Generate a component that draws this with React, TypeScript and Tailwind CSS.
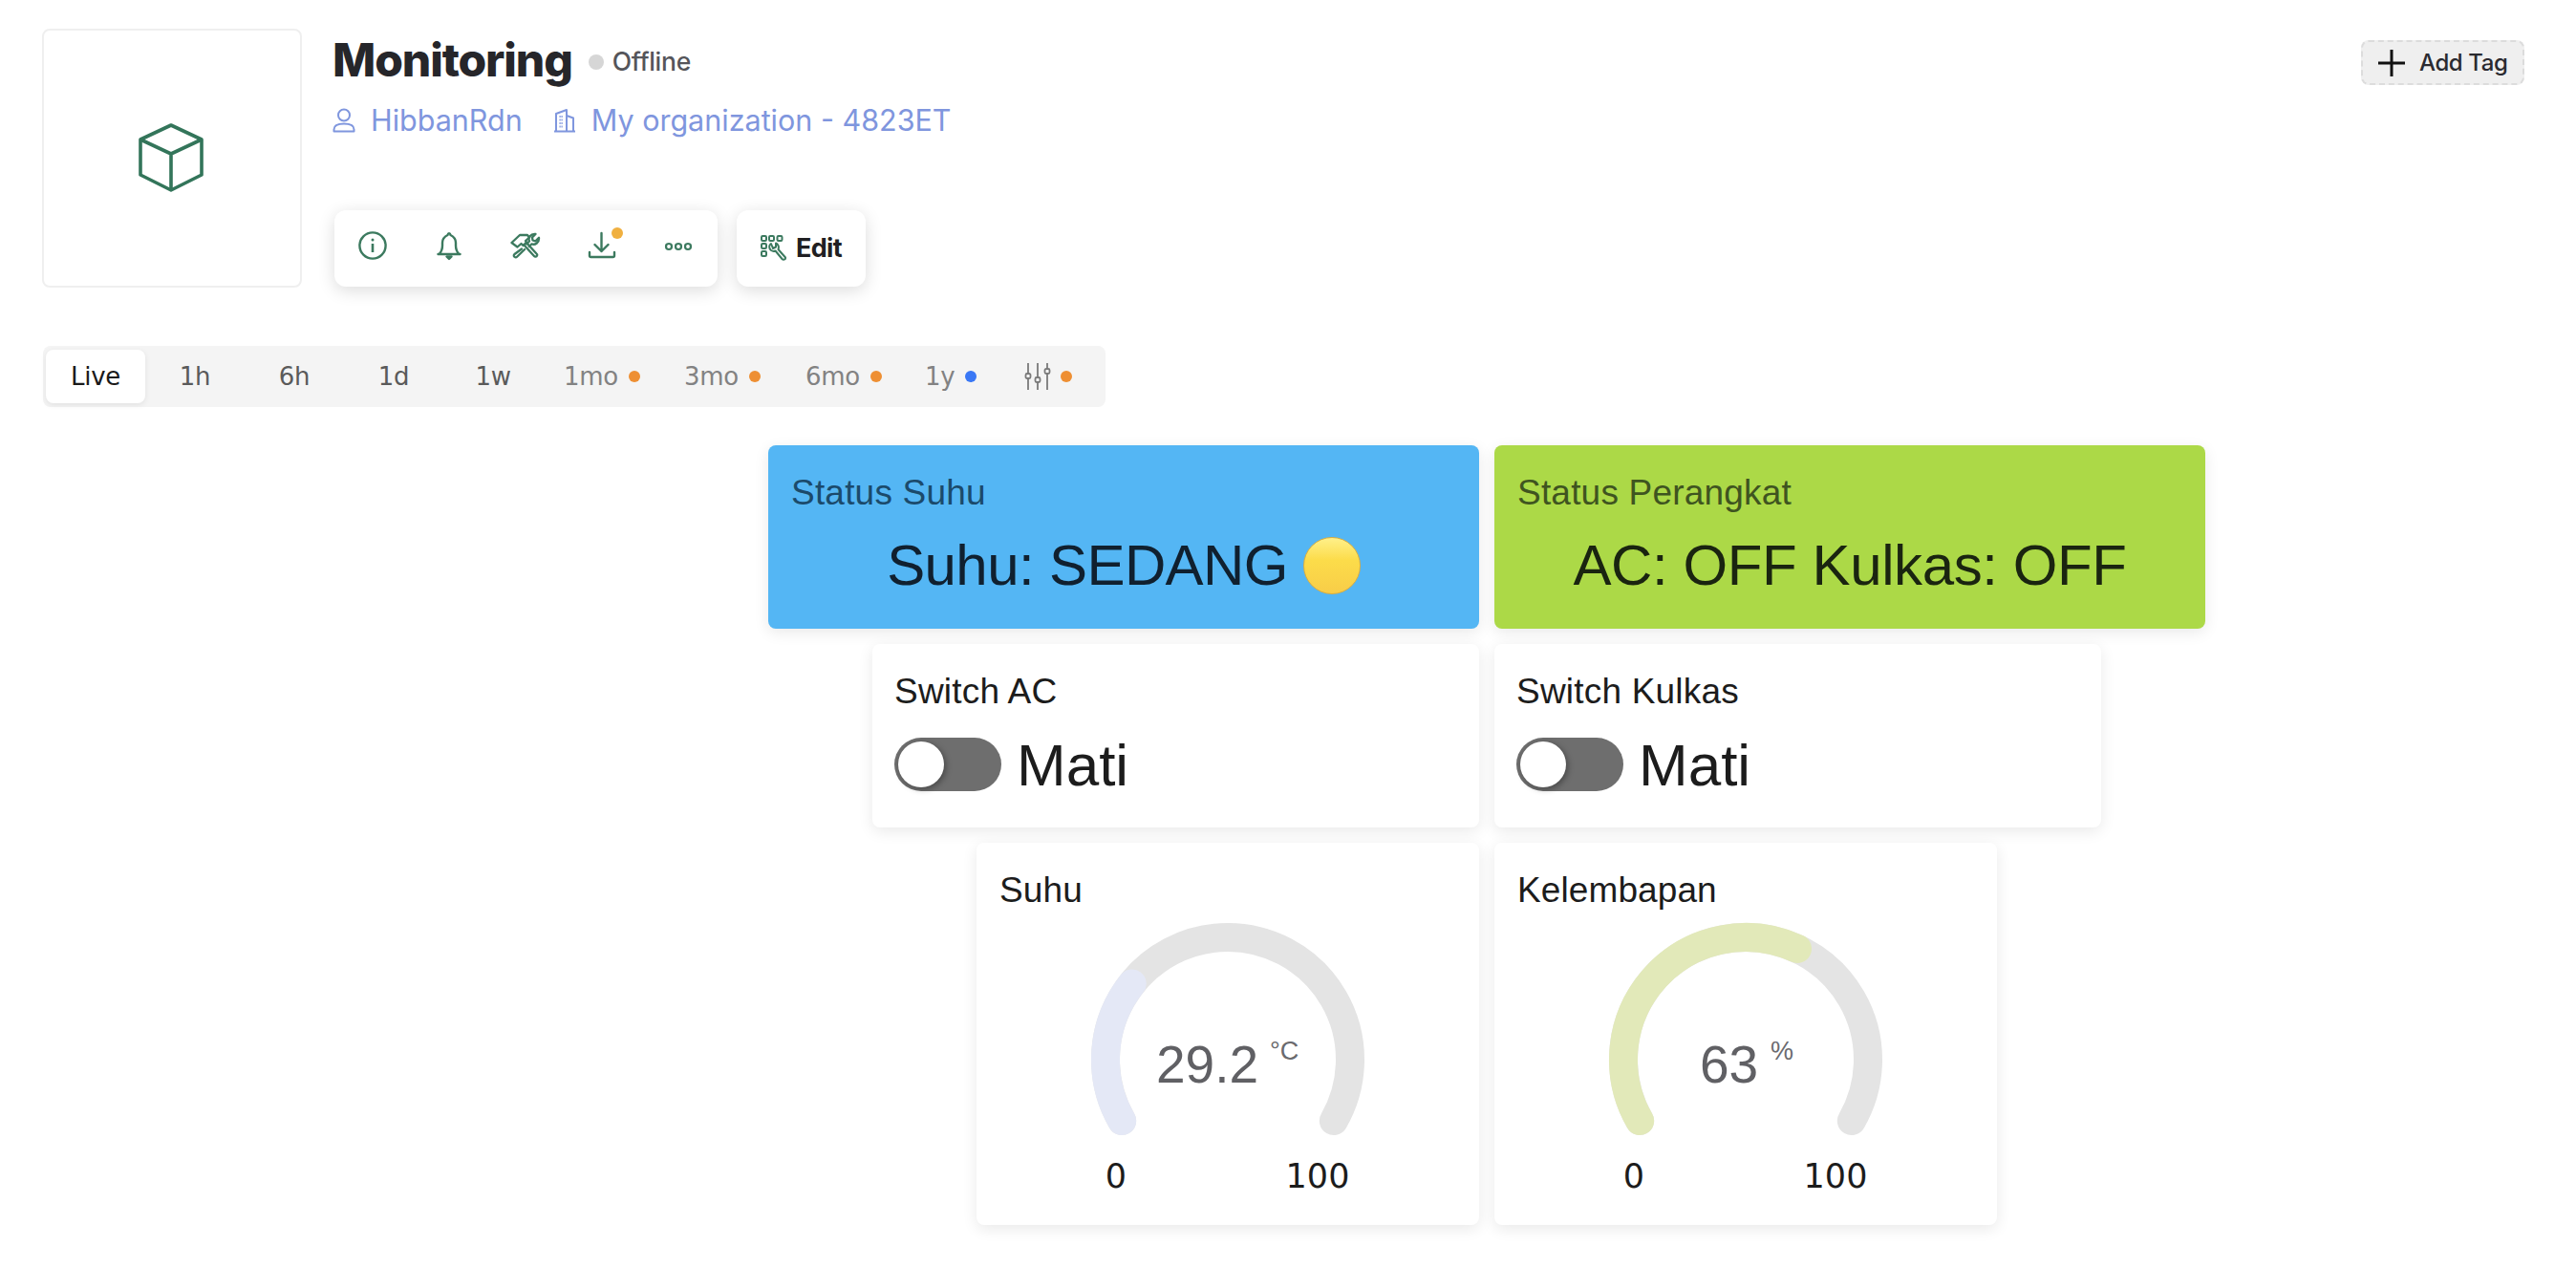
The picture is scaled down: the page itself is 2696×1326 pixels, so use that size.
import React from "react";

const green = "#3c7a5f";
const blue = "#7f96de";

function InfoIcon() {
  return (
    <svg width="32" height="32" viewBox="0 0 32 32" fill="none" stroke={green} strokeWidth="2.4">
      <circle cx="16" cy="16" r="13.6" />
      <path d="M16 14v9" strokeWidth="2.6" />
      <circle cx="16" cy="10" r="1.5" fill={green} stroke="none" />
    </svg>
  );
}
function BellIcon() {
  return (
    <svg width="32" height="32" viewBox="0 0 32 32" fill="none" stroke={green} strokeWidth="2.4" strokeLinejoin="round" strokeLinecap="round">
      <path d="M4.500 25h23M5.500 25c2.500-2.500 3.500-5 3.500-9v-3c0-5 3.500-7 5.500-8 .5-2.500 2.500-2.500 3 0 2 1 5.500 3 5.500 8v3c0 4 1 6.500 3.500 9" />
      <path d="M13.500 27.500h5l-2.500 2.500z" fill={green} />
    </svg>
  );
}
function ToolsIcon() {
  return (
    <svg width="32" height="32" viewBox="0 0 32 32" fill="none" stroke={green} strokeWidth="2.3" strokeLinejoin="round" strokeLinecap="round">
      <path d="M1.500 13 10 5h8l2 2.500-4 3.500 1 1.500-3.500 3.500-2-2-4 3.500z" />
      <path d="M14.500 15.500 25 27a1.800 1.800 0 0 0 3-.5c.5-.8 0-1.500-.5-2L17 13" />
      <path d="M12 19.500 4.500 25c-1 1-1 2 0 2.700.8.800 1.800.800 2.600 0l8-7.700" />
      <path d="m17 14.500 3-3c-1.500-3.500 1-8 6.500-7.500l-3.500 3.500.5 3 3 .8 3.500-3.500c.5 5-4 8-7.500 6.500l-2.700 2.700" />
    </svg>
  );
}
function DownloadIcon() {
  return (
    <svg width="32" height="32" viewBox="0 0 32 32" fill="none" stroke={green} strokeWidth="2.4" strokeLinejoin="round" strokeLinecap="round">
      <path d="M15.500 3v19M8.500 15l7 7 7-7" />
      <path d="M3 23v3.500c0 1 .5 1.500 1.500 1.500h23c1 0 1.500-.5 1.500-1.500V23" />
    </svg>
  );
}
function DotsIcon() {
  return (
    <svg width="32" height="32" viewBox="0 0 32 32" fill="none" stroke={green} strokeWidth="2.2" className="translate-y-[1px]">
      <circle cx="6" cy="16" r="3" />
      <circle cx="16" cy="16" r="3" />
      <circle cx="26" cy="16" r="3" />
    </svg>
  );
}
function EditIcon() {
  return (
    <svg width="28" height="30" viewBox="0 0 28 30" fill="none" stroke={green} strokeWidth="2" strokeLinejoin="round" strokeLinecap="round">
      <rect x="1" y="2" width="5" height="5" rx="1.200" />
      <rect x="9" y="2" width="5" height="5" rx="1.200" />
      <rect x="17.500" y="2" width="5" height="5" rx="1.200" />
      <rect x="1" y="10" width="5" height="5" rx="1.200" />
      <rect x="1" y="18" width="5" height="5" rx="1.200" />
      <path d="M11 10c-2.500 1.500-2.500 5 0 7 1.500 1 3.500 1 4.500.5l7 8.500c1 1 4 1 3.500-1.500l-7.500-8.500c1-2.500 0-5.500-2.500-6.500v4l-3 1.500z" />
    </svg>
  );
}
function PersonIcon() {
  return (
    <svg width="24" height="26" viewBox="0 0 24 26" fill="none" stroke={blue} strokeWidth="2">
      <circle cx="12" cy="7.500" r="6" />
      <path d="M1.500 24.500v-2c0-4 4-6 10.500-6s10.500 2 10.500 6v2z" strokeLinejoin="round" />
    </svg>
  );
}
function OrgIcon() {
  return (
    <svg width="24" height="26" viewBox="0 0 24 26" fill="none" stroke={blue} strokeWidth="2" strokeLinejoin="round">
      <path d="M1 24.500h22M3 24V6l11-4v22M14 8l7 2.500V24" />
      <path d="M6.500 9h4M6.500 12.500h4M6.500 16h4M6.500 19.500h4" strokeWidth="2" strokeDasharray="1.200 .8" />
    </svg>
  );
}
function SliderIcon() {
  return (
    <svg width="28" height="28" viewBox="0 0 28 28" fill="none" stroke="#7a7a7a" strokeWidth="1.800">
      <path d="M4 0v11M4 16v12M14 0v15M14 20v8M24 0v6M24 11v17" />
      <rect x="1.500" y="11" width="5" height="5" rx="1.500" />
      <rect x="11.500" y="15" width="5" height="5" rx="1.500" />
      <rect x="21.500" y="6" width="5" height="5" rx="1.500" />
    </svg>
  );
}

function Tab({ label, tone }: { label: string; tone: string }) {
  return (
    <div className="flex h-full w-[104px] items-center justify-center" style={{ color: tone }}>
      {label}
    </div>
  );
}
function DotTab({ label, dot, w }: { label: string; dot: string; w: number }) {
  return (
    <div className="flex h-full items-center gap-[11px] text-[#828282]" style={{ width: w }}>
      <span>{label}</span>
      <span className="h-3 w-3 rounded-full" style={{ backgroundColor: dot }} />
    </div>
  );
}

function Toggle() {
  return (
    <div className="flex h-14 w-28 items-center rounded-full bg-[#6e6e6e] pl-1">
      <div className="h-12 w-12 rounded-full bg-white shadow-[2px_2px_6px_rgba(0,0,0,0.35)]" />
    </div>
  );
}

function polar(r: number, deg: number, cx: number, cy: number) {
  const a = (deg * Math.PI) / 180;
  return [cx + r * Math.cos(a), cy + r * Math.sin(a)];
}
function arc(from: number, to: number, cx: number, cy: number) {
  const r = 128;
  const [x1, y1] = polar(r, from, cx, cy);
  const [x2, y2] = polar(r, to, cx, cy);
  const large = to - from > 180 ? 1 : 0;
  return `M${x1} ${y1}A${r} ${r} 0 ${large} 1 ${x2} ${y2}`;
}

function Gauge({
  title,
  value,
  unit,
  pct,
  color,
  vx,
  ux,
}: {
  title: string;
  value: string;
  unit: string;
  pct: number;
  color: string;
  vx: number;
  ux: number;
}) {
  const cx = 170;
  const cy = 159;
  return (
    <div className="flex h-[400px] w-[526px] flex-col rounded-lg bg-white pt-[30px] shadow-[0_4px_16px_rgba(0,0,0,0.09)]">
      <div className="h-[40px] pl-6 text-[37px] leading-[40px] tracking-[0.1px] text-[#1c1c1c]">{title}</div>
      <div className="mt-[-2px] flex justify-center">
        <svg width="340" height="310" viewBox="0 0 340 310" className="[font-family:'Liberation_Sans',sans-serif]">
          <path d={arc(150, 390, cx, cy)} fill="none" stroke="#e4e4e4" strokeWidth="30" strokeLinecap="round" />
          <path d={arc(150, 150 + 240 * pct, cx, cy)} fill="none" stroke={color} strokeWidth="30" strokeLinecap="round" />
          <text x={cx + vx} y={cy + 24} fontSize="55" fill="#606064">{value}</text>
          <text x={cx + ux} y={cy} fontSize="27" fill="#6a6a6e" fontWeight="300">{unit}</text>
          <text x={cx - 117} y={cy + 134} fontSize="35" fill="#1c1c1c" textAnchor="middle" fontFamily="'DejaVu Sans',sans-serif">0</text>
          <text x={cx + 94} y={cy + 134} fontSize="35" fill="#1c1c1c" textAnchor="middle" fontFamily="'DejaVu Sans',sans-serif">100</text>
        </svg>
      </div>
    </div>
  );
}

export default function App() {
  return (
    <div className="relative min-h-[1326px] w-full bg-white pt-[30px] [font-family:'Liberation_Sans',sans-serif]">
      <div className="flex items-start justify-between pl-[44px] pr-[54px]">
        <div className="flex">
          <div className="flex h-[271px] w-[272px] items-center justify-center rounded-lg border-2 border-[#efefef]">
            <svg width="68" height="72" viewBox="0 0 68 72" fill="none" stroke="#33755a" strokeWidth="3.600" strokeLinejoin="round" className="-ml-[2px] -mt-[2px]">
              <path d="M34 2 66 17v37L34 70 2 54V17z" />
              <path d="M2 17l32 15 32-15M34 32v38" />
            </svg>
          </div>
          <div className="ml-[32px] flex flex-col [font-family:Inter,sans-serif]">
            <div className="flex h-[60px] items-center pt-[6px]">
              <span className="text-[48px] font-extrabold leading-[60px] tracking-[-1.100px] text-[#26262a]">Monitoring</span>
              <span className="ml-[17px] mt-[3px] h-4 w-4 rounded-full bg-[#d6d6d6]" />
              <span className="ml-[9px] mt-[3px] text-[26.5px] font-medium tracking-[-0.3px] text-[#55555a]">Offline</span>
            </div>
            <div className="mt-[18px] flex h-[36px] items-center text-[30.5px] text-[#7f96de]">
              <PersonIcon />
              <span className="ml-[16px]">HibbanRdn</span>
              <span className="ml-[32px]"><OrgIcon /></span>
              <span className="ml-[16px]">My organization - 4823ET</span>
            </div>
            <div className="ml-[2px] mt-[76px] flex gap-5">
              <div className="flex h-20 w-[401px] rounded-xl bg-white shadow-[0_4px_18px_rgba(0,0,0,0.14)]">
                {[<InfoIcon />, <BellIcon />, <ToolsIcon />, <DownloadIcon />, <DotsIcon />].map((icon, i) => (
                  <div key={i} className="relative flex w-20 justify-center pt-[21px]">
                    {icon}
                    {i === 3 && <span className="absolute left-[50px] top-[18px] h-3 w-3 rounded-full bg-[#f0b040]" />}
                  </div>
                ))}
              </div>
              <div className="flex h-20 w-[135px] items-center justify-center gap-[9px] rounded-xl bg-white shadow-[0_4px_18px_rgba(0,0,0,0.14)]">
                <EditIcon />
                <span className="text-[27px] font-bold tracking-[-0.6px] text-[#1f1f22]">Edit</span>
              </div>
            </div>
          </div>
        </div>
        <div className="mt-3 flex h-[47px] w-[171px] items-center gap-[15px] rounded-lg border-2 border-dashed border-[#dcdcdc] bg-[#efefef] pl-[16px] [font-family:Inter,sans-serif]">
          <svg width="28" height="28" viewBox="0 0 28 28" stroke="#111" strokeWidth="3" fill="none">
            <path d="M14 0v28M0 14h28" />
          </svg>
          <span className="text-[24px] font-medium leading-none tracking-[-0.4px] text-[#2a2a30]">Add Tag</span>
        </div>
      </div>

      <div className="ml-[45px] mt-[61px] flex h-16 w-[1112px] items-center rounded-lg bg-[#f4f4f4] pl-[3px] text-[26px] tracking-[-0.3px] [font-family:'DejaVu_Sans',sans-serif]">
        <div className="flex h-14 w-[104px] items-center justify-center rounded-lg bg-white text-[#1a1a1a] shadow-[0_2px_6px_rgba(0,0,0,0.08)]">Live</div>
        <Tab label="1h" tone="#5a5a5a" />
        <Tab label="6h" tone="#5a5a5a" />
        <Tab label="1d" tone="#5a5a5a" />
        <Tab label="1w" tone="#5a5a5a" />
        <div className="w-[22px]" />
        <DotTab label="1mo" dot="#ee8f33" w={126} />
        <DotTab label="3mo" dot="#ee8f33" w={127} />
        <DotTab label="6mo" dot="#ee8f33" w={125} />
        <DotTab label="1y" dot="#3a78f5" w={104} />
        <div className="flex items-center gap-[10px]">
          <SliderIcon />
          <span className="h-3 w-3 rounded-full bg-[#ee8f33]" />
        </div>
      </div>

      <div className="mt-10 flex flex-col items-center gap-4 pl-[416px]">
        <div className="flex gap-4">
          <div className="h-48 w-[744px] rounded-lg bg-[#54b6f4] pt-[30px] shadow-[0_4px_16px_rgba(0,0,0,0.09)]">
            <div className="h-10 pl-6 text-[37px] leading-10 tracking-[0.2px] text-[#1b4a6b]">Status Suhu</div>
            <div className="mt-[21px] flex h-[70px] items-center justify-center gap-[16px] text-[60px] leading-[70px] tracking-[-0.6px] text-[#10202f]">
              <span>Suhu: SEDANG</span>
              <span className="h-[60px] w-[60px] rounded-full border border-[#dcae3e] bg-[linear-gradient(180deg,#fff08a_0%,#fcdc4a_40%,#f8cd48_100%)]" />
            </div>
          </div>
          <div className="h-48 w-[744px] rounded-lg bg-[#acd947] pt-[30px] shadow-[0_4px_16px_rgba(0,0,0,0.09)]">
            <div className="h-10 pl-6 text-[37px] leading-10 tracking-[0.2px] text-[#3f5420]">Status Perangkat</div>
            <div className="mt-[21px] h-[70px] text-center text-[60px] leading-[70px] tracking-[-0.4px] text-[#1a2410]">AC: OFF Kulkas: OFF</div>
          </div>
        </div>
        <div className="flex gap-4">
          {["Switch AC", "Switch Kulkas"].map((t) => (
            <div key={t} className="h-48 w-[635px] rounded-lg bg-white pl-[23px] pt-[30px] shadow-[0_4px_16px_rgba(0,0,0,0.09)]">
              <div className="h-10 text-[37px] leading-10 tracking-[0.2px] text-[#1c1c1c]">{t}</div>
              <div className="mt-[28px] flex h-14 items-center gap-[16px] text-[62px] text-[#1c1c1c]">
                <Toggle />
                <span>Mati</span>
              </div>
            </div>
          ))}
        </div>
        <div className="flex gap-4">
          <Gauge title="Suhu" value="29.2" unit="°C" pct={0.285} color="#e4e8f6" vx={-75} ux={44} />
          <Gauge title="Kelembapan" value="63" unit="%" pct={0.604} color="#e2e9b9" vx={-48} ux={26} />
        </div>
      </div>
    </div>
  );
}
